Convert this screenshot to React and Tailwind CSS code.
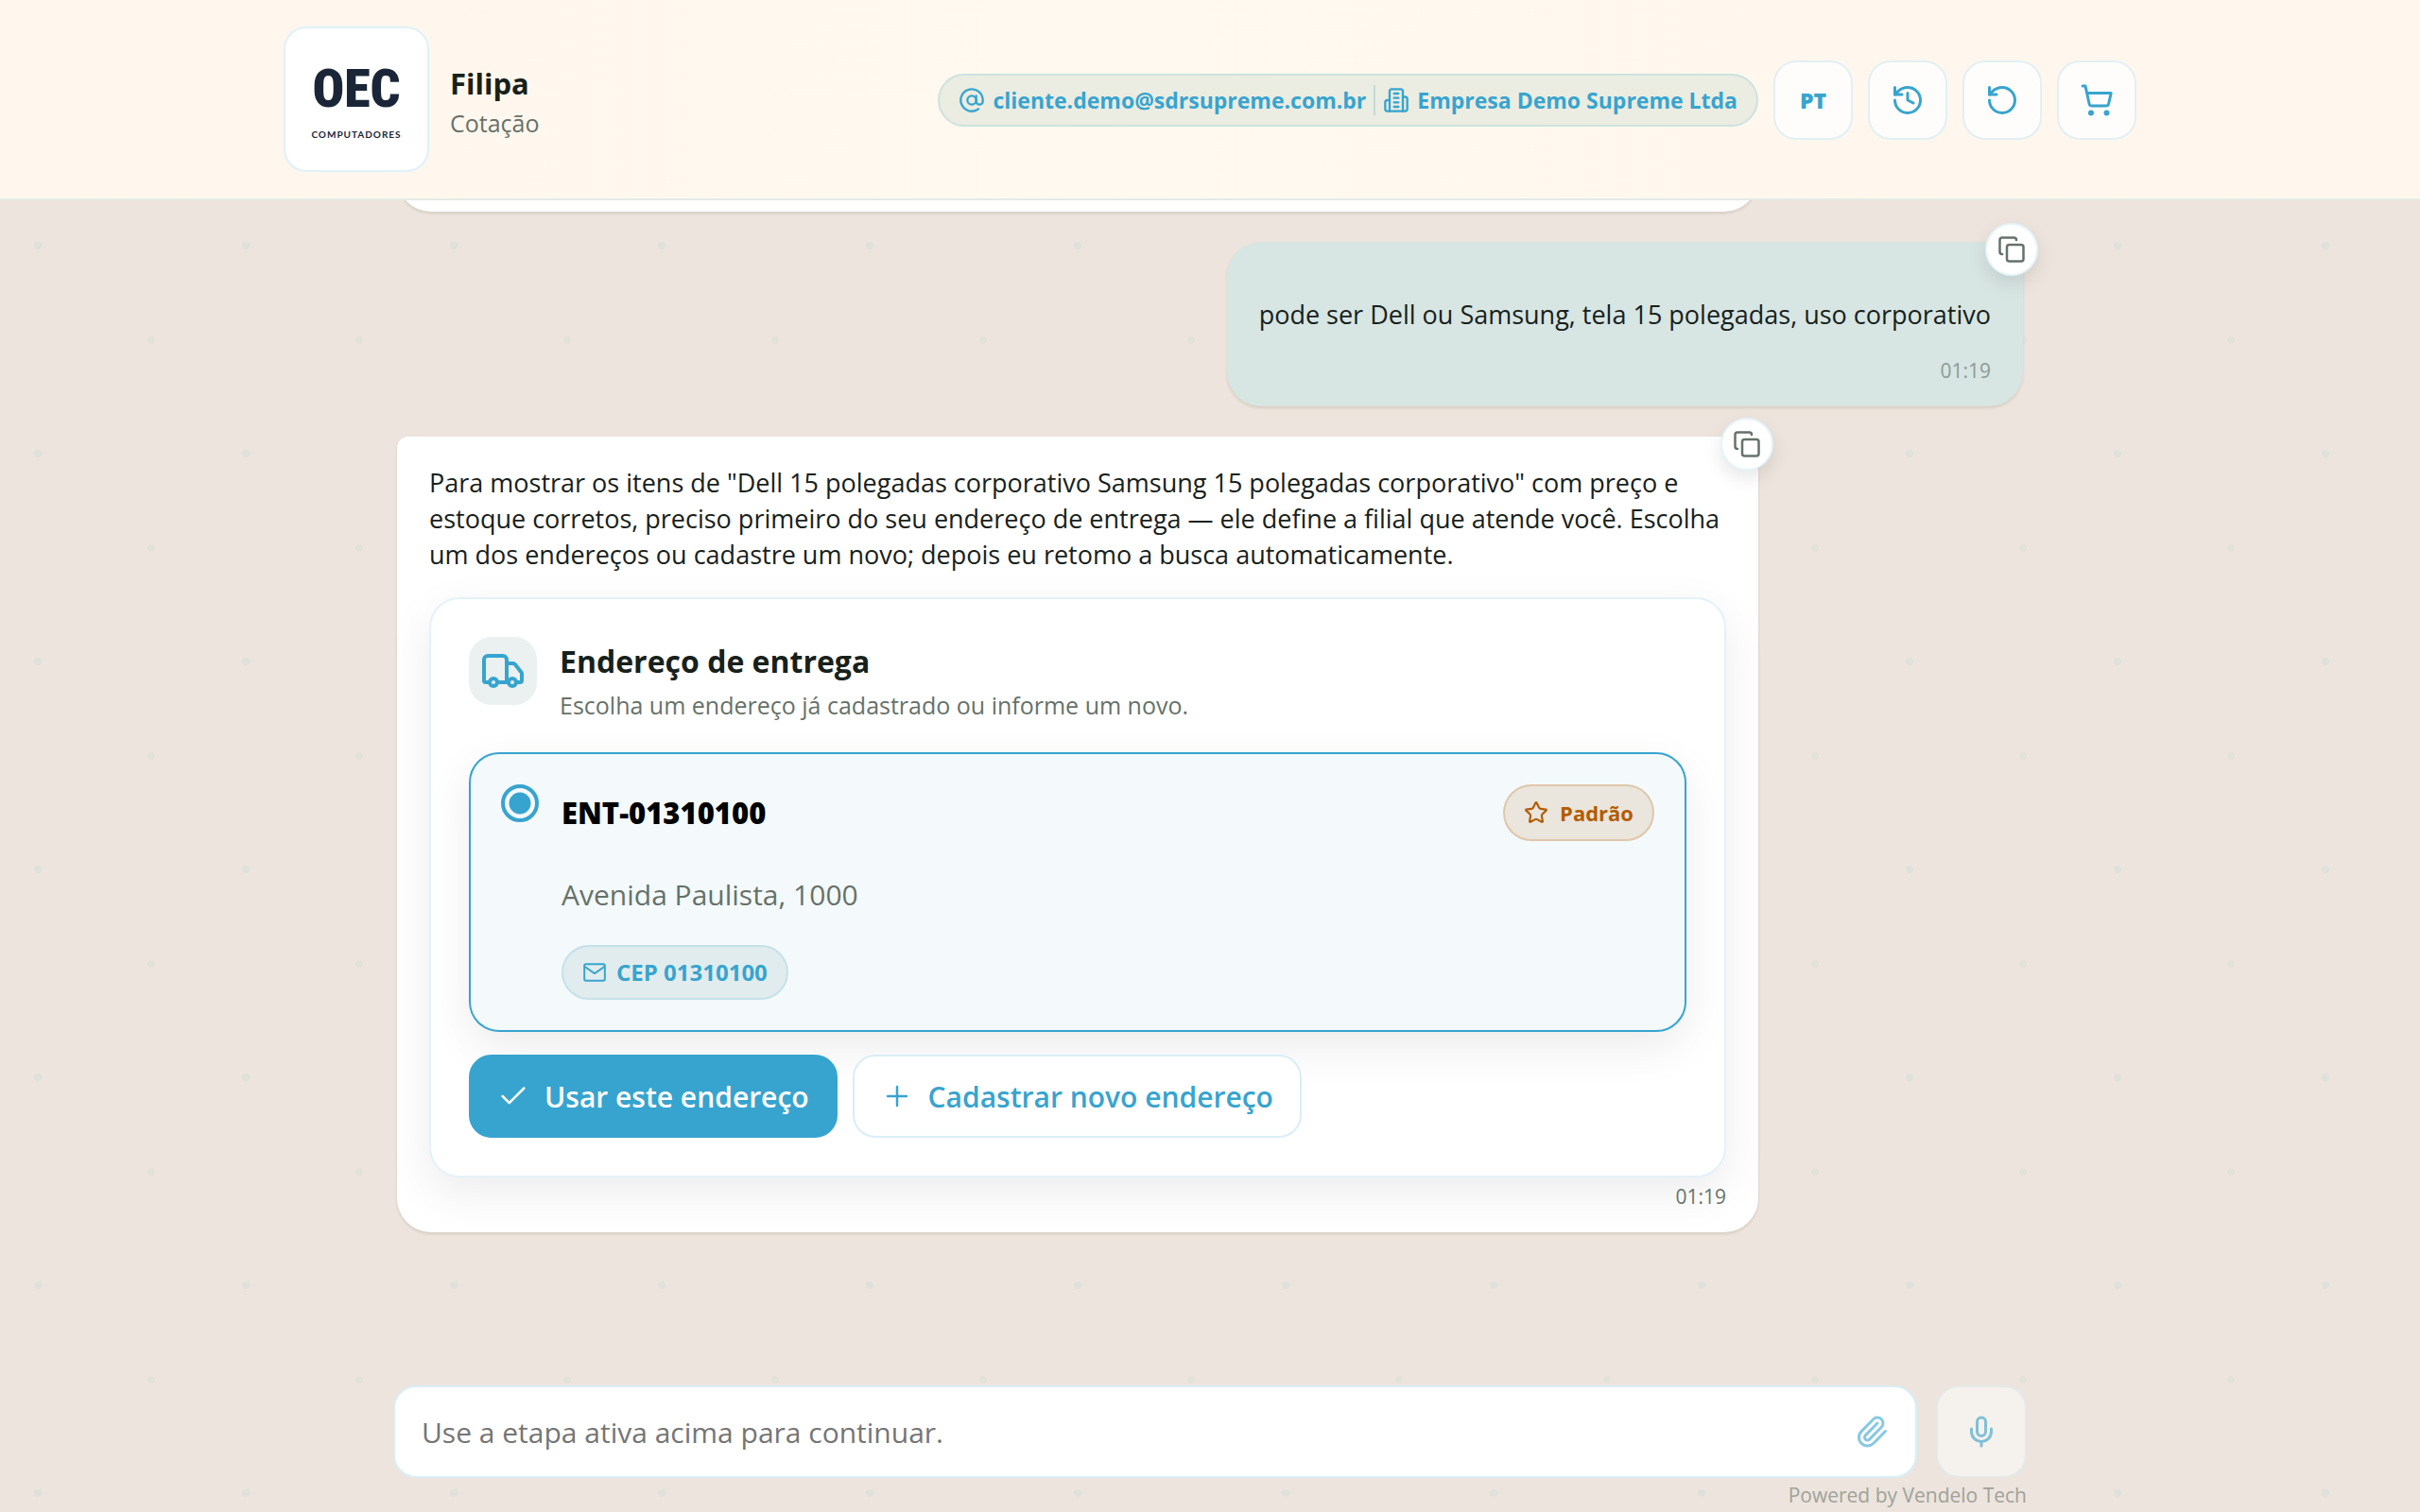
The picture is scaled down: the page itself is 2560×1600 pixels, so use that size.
import { useState } from 'react'
import {
  AtSign, Check, Copy, History, Mic, Paperclip, Plus, RotateCcw, ShoppingCart, Star, Truck,
} from 'lucide-react'

const headerActions = [
  { label: 'Histórico',       icon: History      },
  { label: 'Nova conversa',   icon: RotateCcw    },
  { label: 'Carrinho',        icon: ShoppingCart },
]

function BuildingIcon({ size = 24 }) {
  return (
    <svg width={size} height={size} viewBox="0 0 24 24" fill="none" stroke="currentColor" strokeWidth="2" strokeLinecap="round" strokeLinejoin="round">
      <path d="M6 22V4a2 2 0 0 1 2-2h8a2 2 0 0 1 2 2v18Z" />
      <path d="M6 12H4a2 2 0 0 0-2 2v6a2 2 0 0 0 2 2h2" />
      <path d="M18 9h2a2 2 0 0 1 2 2v9a2 2 0 0 1-2 2h-2" />
      <path d="M10 6h4M10 10h4M10 14h4M10 18h4" />
    </svg>
  )
}

function MailIcon({ size = 24 }) {
  return (
    <svg width={size} height={size} viewBox="0 0 24 24" fill="none" stroke="currentColor" strokeWidth="1.8" strokeLinecap="round" strokeLinejoin="round">
      <rect x="2" y="4" width="20" height="16" rx="1.5" />
      <path d="m2.5 6.5 9.5 6.5 9.5-6.5" />
    </svg>
  )
}

function Header() {
  const buttonClass =
    'flex size-21 items-center justify-center rounded-3xl border-2 border-[#e1f0f3] bg-[#fffdfb] text-[#37a4cf]'

  return (
    <header className="border-b-2 border-[#e5ebe6] bg-linear-to-r from-[#fff7ed] from-15% via-[#fff9ef] via-45% to-[#fff7ed] to-80%">
      <div className="mx-auto flex max-w-[1960px] items-center justify-between py-7">
        <div className="flex items-center gap-[22px]">
          {/* Logo */}
          <div className="flex size-[154px] flex-col items-center justify-center rounded-3xl border-2 border-[#dff1f9] bg-white pt-1.5 text-[#1a2638]">
            <span className="font-['Liberation_Sans_Narrow','Arial_Narrow','Roboto_Condensed',sans-serif] text-[56px] leading-[64px] font-black">
              OEC
            </span>
            <span className="mt-1 font-['Lato',sans-serif] text-[10px] leading-6 font-bold tracking-widest">
              COMPUTADORES
            </span>
          </div>
          <div className="pt-1">
            <h1 className="text-[31px] leading-11 font-bold">Filipa</h1>
            <p className="mt-0.5 text-[25px] leading-9 text-[#667269]">Cotação</p>
          </div>
        </div>

        <div className="flex items-center gap-4 pt-0.5">
          <div className="flex h-14 items-center gap-2 rounded-full border-2 border-[#cde2df] bg-[#ebece2] px-5 text-[23px] font-bold text-[#37a4cf]">
            <AtSign size={28} />
            <span>cliente.demo@sdrsupreme.com.br</span>
            <span className="h-8 w-0.5 bg-[#c0dcdb]" />
            <BuildingIcon size={28} />
            <span>Empresa Demo Supreme Ltda</span>
          </div>
          <button className={`${buttonClass} text-[23px] font-extrabold`}>PT</button>
          {headerActions.map((action) => {
            const Icon = action.icon
            return (
              <button key={action.label} aria-label={action.label} className={buttonClass}>
                <Icon size={36} />
              </button>
            )
          })}
        </div>
      </div>
    </header>
  )
}

function CopyButton() {
  return (
    <button
      aria-label="Copiar mensagem"
      className="absolute -top-5 -right-4 flex size-14 items-center justify-center rounded-full border-2 border-[#e6f3fa] bg-white text-[#667269] shadow-[0_8px_20px_rgba(0,0,0,0.10)]"
    >
      <Copy size={30} />
    </button>
  )
}

function AddressCard() {
  const [selected, setSelected] = useState('ENT-01310100')

  return (
    <section className="mt-6.5 rounded-[32px] border-2 border-[#e3f2fa] bg-white p-10 shadow-[0_16px_48px_rgba(0,0,0,0.08)]">
      <div className="flex items-start gap-6">
        <div className="flex size-18 items-center justify-center rounded-3xl bg-[#ebf1f1] text-[#37a4cf]">
          <Truck size={48} />
        </div>
        <div className="pt-1">
          <h2 className="text-[32px] leading-11 font-bold">Endereço de entrega</h2>
          <p className="mt-1.5 text-[25px] leading-9 text-[#667269]">
            Escolha um endereço já cadastrado ou informe um novo.
          </p>
        </div>
      </div>

      <label className="mt-8 flex items-start gap-6 rounded-[32px] border-2 border-[#37a4cf] bg-[#f4f9fc] p-8 shadow-[0_16px_48px_rgba(0,0,0,0.08)]">
        <input
          type="radio"
          name="address"
          value="ENT-01310100"
          checked={selected === 'ENT-01310100'}
          onChange={e => setSelected(e.target.value)}
          className="size-10 flex-none appearance-none rounded-full border-4 border-[#37a4cf] bg-white bg-clip-padding checked:bg-radial checked:from-[#37a4cf] checked:from-[11px] checked:to-[#f4f9fc] checked:to-[12px]"
        />
        <span className="flex flex-1 flex-col items-start">
          <span className="flex w-full items-center justify-between">
            <span className="text-[31px] leading-11 font-extrabold text-black">ENT-01310100</span>
            <span className="flex h-15 items-center gap-3 rounded-full border-2 border-[#e0c7aa] bg-[#eae5dd] px-5 text-[22px] font-bold text-[#b35c00]">
              <Star size={26} />
              Padrão
            </span>
          </span>
          <span className="mt-8 text-[30px] leading-[50px] text-[#667269]">Avenida Paulista, 1000</span>
          <span className="mt-7 flex h-[58px] items-center gap-2.5 rounded-full border-2 border-[#c5e1e9] bg-[#e1ecee] px-5 text-[24px] font-bold text-[#37a4cf]">
            <MailIcon size={26} />
            CEP 01310100
          </span>
        </span>
      </label>

      <div className="mt-6 flex gap-4">
        <button className="flex h-22 items-center gap-4 rounded-3xl border-2 border-[#37a4cf] bg-[#37a4cf] px-7 text-[30px] font-semibold text-white">
          <Check size={34} strokeWidth={1.75} />
          Usar este endereço
        </button>
        <button className="flex h-22 items-center gap-4 rounded-3xl border-2 border-[#d9eef7] bg-white px-7 text-[30px] font-semibold text-[#37a4cf]">
          <Plus size={34} strokeWidth={1.75} />
          Cadastrar novo endereço
        </button>
      </div>
    </section>
  )
}

function Messages() {
  return (
    <main className="flex-1 overflow-hidden">
      <div className="mx-auto flex max-w-[1720px] flex-col gap-8">
        {/* Tail of the previous answer, scrolled under the header */}
        <div className="-mt-9 h-12 w-[1440px] max-w-full self-start rounded-b-[36px] bg-white shadow-[0_2px_3px_rgba(60,50,20,0.12)]" />

        <article className="relative self-end rounded-[36px] rounded-tr-xl bg-[#d7e5e3] px-[34px] pt-14.5 pb-6 shadow-[0_2px_3px_rgba(60,50,20,0.12)]">
          <CopyButton />
          <p className="text-[27px] leading-[38px]">
            pode ser Dell ou Samsung, tela 15 polegadas, uso corporativo
          </p>
          <time className="mt-6.5 block text-right text-[21px] leading-7 text-[#8c9b95]">01:19</time>
        </article>

        <article className="relative w-[1440px] max-w-full self-start rounded-[36px] rounded-tl-xl bg-white px-[34px] pt-7.5 pb-6 shadow-[0_2px_3px_rgba(60,50,20,0.12)]">
          <CopyButton />
          <p className="text-[27px] leading-[38px]">
            Para mostrar os itens de "Dell 15 polegadas corporativo Samsung 15 polegadas corporativo" com preço e
            estoque corretos, preciso primeiro do seu endereço de entrega — ele define a filial que atende você. Escolha
            um dos endereços ou cadastre um novo; depois eu retomo a busca automaticamente.
          </p>
          <AddressCard />
          <time className="mt-1.5 block text-right text-[21px] leading-7 text-[#667269]">01:19</time>
        </article>
      </div>
    </main>
  )
}

function Composer() {
  return (
    <footer className="mx-auto w-full max-w-[1728px] pb-1">
      <form className="flex gap-5" onSubmit={e => e.preventDefault()}>
        <div className="flex h-[98px] flex-1 items-center rounded-3xl border-2 border-[#d9eef7] bg-white px-7">
          <input
            type="text"
            aria-label="Mensagem"
            placeholder="Use a etapa ativa acima para continuar."
            className="min-w-0 flex-1 bg-transparent text-[30px] outline-none placeholder:text-[#757575]"
          />
          <button type="button" aria-label="Anexar arquivo" className="text-[#87c8e2]">
            <Paperclip size={36} />
          </button>
        </div>
        <button
          type="button"
          aria-label="Gravar áudio"
          className="flex h-[98px] w-24 items-center justify-center rounded-3xl border-2 border-[#e4e9e7] bg-[#f5f1ec] text-[#80c0d7]"
        >
          <Mic size={36} />
        </button>
      </form>
      <p className="mt-1 text-right text-[21px] leading-7 text-[#a0a299]">Powered by Vendelo Tech</p>
    </footer>
  )
}

export default function App() {
  return (
    <div className="flex h-screen flex-col bg-[#ece4dd] bg-[radial-gradient(circle_at_40px_40px,#dfe1db_4px,transparent_4px),radial-gradient(circle_at_160px_140px,#e3e2da_4px,transparent_4px)] bg-size-[220px_220px] font-['Open_Sans','Noto_Sans',sans-serif] text-[#17211b]">
      <Header />
      <Messages />
      <Composer />
    </div>
  )
}
